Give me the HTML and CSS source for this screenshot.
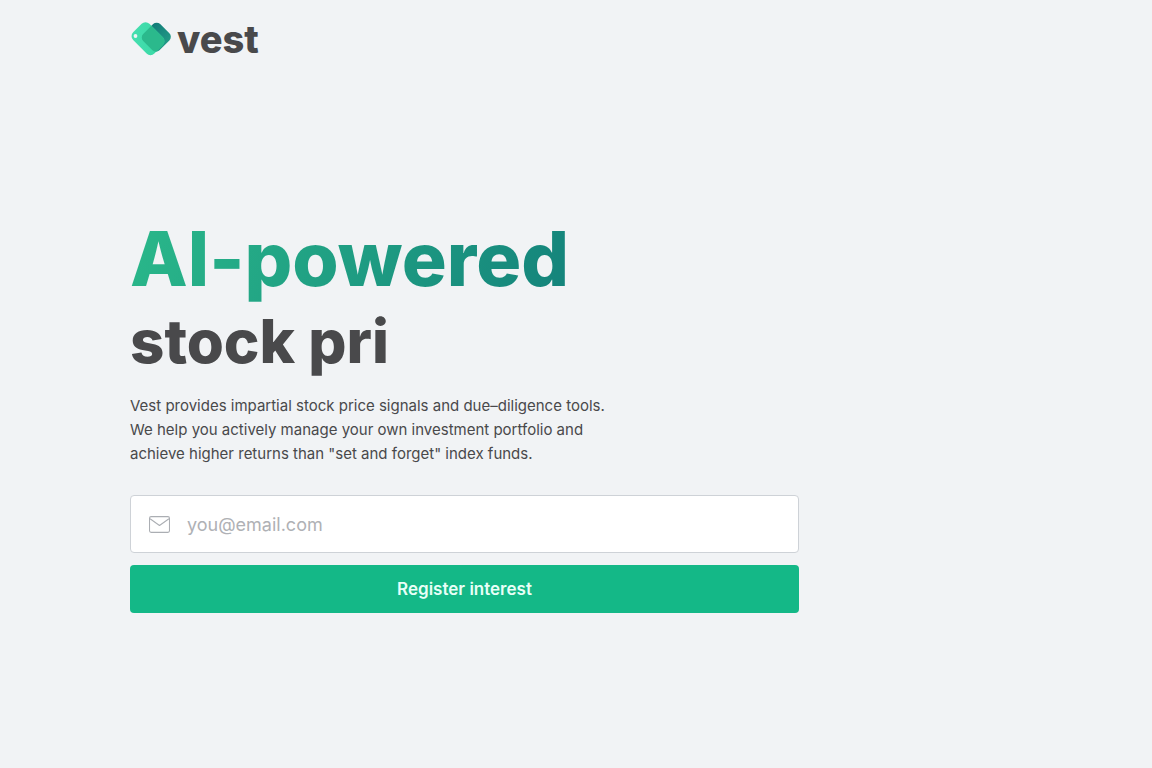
FILE: index.html
```html
<!DOCTYPE html>
<html lang="en">
<head>
<meta charset="utf-8">
<title>Vest</title>
<link rel="stylesheet" href="styles.css">
</head>
<body>
<div class="page">
  <header class="header">
    <a class="brand" href="#">
      <svg class="brand-mark" viewBox="0 0 41 35" aria-hidden="true">
        <defs>
          <linearGradient id="teal" x1="0" y1="0" x2="1" y2="0"><stop offset="0" stop-color="#127b78"/><stop offset="1" stop-color="#219985"/></linearGradient>
          <linearGradient id="mint" x1="0" y1="0" x2="1" y2="0"><stop offset="0" stop-color="#46dfb0"/><stop offset="1" stop-color="#35d6a1"/></linearGradient>
          <clipPath id="tag"><rect x="3" y="5.200" width="30" height="23" rx="5.500" transform="rotate(45 18 16.700)"/></clipPath>
        </defs>
        <rect x="14.800" y="3.200" width="23" height="24" rx="5" transform="rotate(45 26.300 15.200)" fill="url(#teal)"/>
        <g clip-path="url(#tag)">
          <rect width="41" height="35" fill="url(#mint)"/>
          <rect x="14.800" y="3.200" width="23" height="24" rx="5" transform="rotate(45 26.300 15.200)" fill="#2bb98c"/>
        </g>
        <circle cx="5.500" cy="14" r="1.900" fill="#f1f3f5"/>
      </svg>
      <span class="brand-name">vest</span>
    </a>
  </header>
  <main class="hero">
    <h1 class="title"><span class="title-accent">AI-powered</span><span class="title-typed">stock pri</span></h1>
    <p class="lead">Vest provides impartial stock price signals and due–diligence tools. We help you actively manage your own investment portfolio and achieve higher returns than "set and forget" index funds.</p>
    <form class="signup">
      <label class="field" aria-label="Email address">
        <svg class="field-icon" viewBox="0 0 20 16" aria-hidden="true"><rect x=".5" y=".5" width="19" height="15" rx="1.500"/><path d="M1 2.500 10 9 19 2.500"/></svg>
        <input class="field-input" type="email" placeholder="you@email.com">
      </label>
      <button class="button" type="submit">Register interest</button>
    </form>
  </main>
</div>
</body>
</html>
```
FILE: styles.css
```css
* { box-sizing: border-box; }
body {
  margin: 0;
  background: #f1f3f5;
  color: #49494b;
  font-family: Inter, "Liberation Sans", sans-serif;
}
.page {
  max-width: 892px;
  min-height: 100vh;
  margin: 0 auto;
}
.header { padding: 17px 0 16px; }
.brand {
  display: inline-flex;
  align-items: center;
  gap: 6px;
  color: inherit;
  text-decoration: none;
}
.brand-mark { width: 41px; height: 35px; }
.brand-name {
  font-size: 38px;
  font-weight: 800;
  line-height: 44px;
}
.hero {
  width: 75%;
  padding-top: 138px;
}
.title {
  margin: 0;
  font-weight: 800;
}
.title-accent, .title-typed {
  display: block;
  width: fit-content;
}
.title-accent {
  font-size: 75px;
  line-height: 88px;
  background: linear-gradient(110deg, #2ab88a, #14837b);
  -webkit-background-clip: text;
  background-clip: text;
  color: transparent;
}
.title-typed {
  font-size: 60px;
  line-height: 76px;
}
.lead {
  max-width: 490px;
  margin: 15px 0 29px;
  font-size: 15px;
  font-weight: 400;
  line-height: 24px;
}
.signup {
  display: grid;
  gap: 12px;
}
.field {
  display: flex;
  align-items: center;
  gap: 17px;
  height: 58px;
  padding: 0 18px;
  background: #fff;
  border: 1px solid #ced2d7;
  border-radius: 4px;
}
.field-icon {
  flex: none;
  width: 21px;
  height: 17px;
  fill: none;
  stroke: #abaeb3;
  stroke-linejoin: round;
}
.field-input {
  flex: 1;
  min-width: 0;
  padding: 2px 0 0;
  border: 0;
  outline: 0;
  background: none;
  color: inherit;
  font: 18px/28px Inter, "Liberation Sans", sans-serif;
}
.field-input::placeholder { color: #afb1b5; }
.button {
  height: 48px;
  border: 0;
  border-radius: 4px;
  background: #14b887;
  color: #e8fff7;
  font: 600 17px/24px Inter, "Liberation Sans", sans-serif;
  cursor: pointer;
}
```
